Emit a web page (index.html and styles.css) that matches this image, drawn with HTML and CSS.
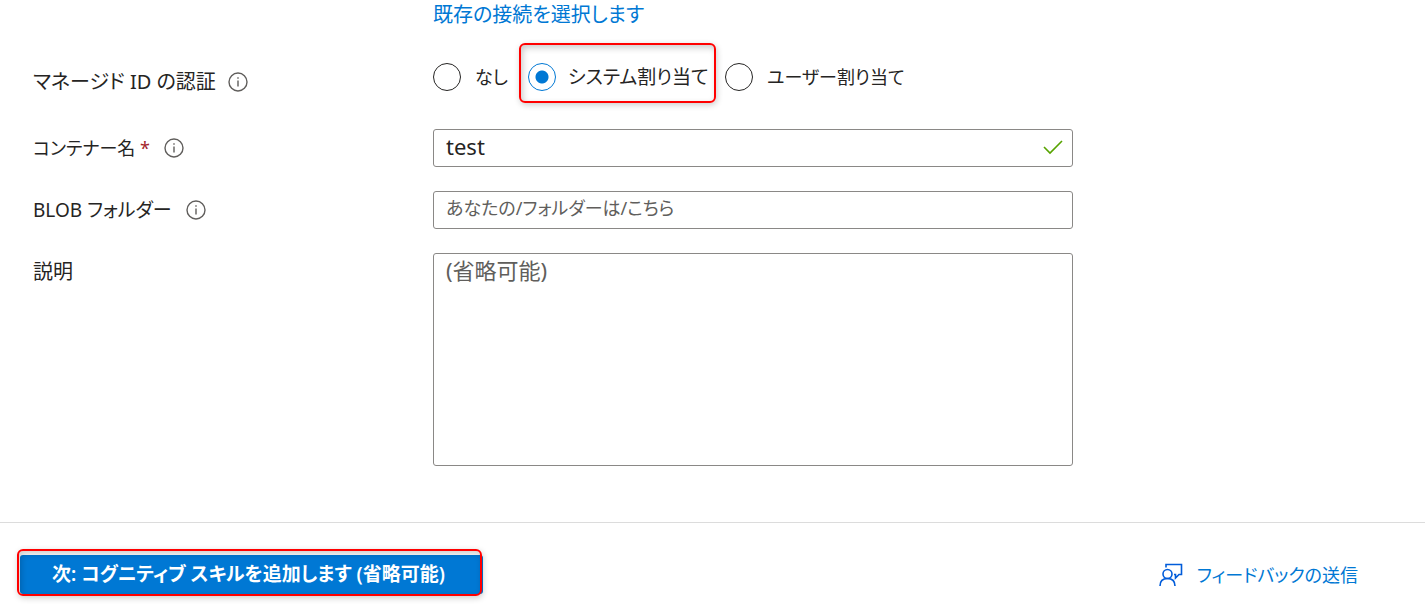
FILE: index.html
```html
<!DOCTYPE html>
<html lang="ja">

<head>
    <meta charset="utf-8">
    <title>データのインポート</title>
    <link rel="stylesheet" href="styles.css">
</head>

<body>
    <form class="form">
        <div class="row row-link">
            <a class="link" href="#">既存の接続を選択します</a>
        </div>
        <div class="row row-auth" role="radiogroup" aria-labelledby="auth_label">
            <div class="label">
                <span id="auth_label">マネージド ID の認証</span>
                <svg class="info" viewBox="0 0 20 20" aria-hidden="true">
                    <circle cx="10" cy="10" r="9" />
                    <path d="M10 8.5v6M10 5.2v1.6" />
                </svg>
            </div>
            <div class="radios">
                <label class="radio"><input type="radio" name="auth"><span>なし</span></label>
                <label class="radio marked"><input type="radio" name="auth" checked><span>システム割り当て</span></label>
                <label class="radio"><input type="radio" name="auth"><span>ユーザー割り当て</span></label>
            </div>
        </div>
        <div class="row">
            <div class="label compact">
                <label for="container">コンテナー名 <span class="required">*</span></label>
                <svg class="info" viewBox="0 0 20 20" aria-hidden="true">
                    <circle cx="10" cy="10" r="9" />
                    <path d="M10 8.5v6M10 5.2v1.6" />
                </svg>
            </div>
            <div class="field valid">
                <input type="text" id="container" class="large" value="test">
                <svg class="check" viewBox="0 0 20 16" aria-hidden="true">
                    <path d="M1 8l6 6L19 2" />
                </svg>
            </div>
        </div>
        <div class="row">
            <div class="label medium">
                <label for="folder">BLOB フォルダー</label>
                <svg class="info" viewBox="0 0 20 20" aria-hidden="true">
                    <circle cx="10" cy="10" r="9" />
                    <path d="M10 8.5v6M10 5.2v1.6" />
                </svg>
            </div>
            <div class="field">
                <input type="text" id="folder" class="compact" placeholder="あなたの/フォルダーは/こちら">
            </div>
        </div>
        <div class="row">
            <div class="label">
                <label for="description">説明</label>
            </div>
            <div class="field">
                <textarea id="description" class="large" placeholder="(省略可能)"></textarea>
            </div>
        </div>
    </form>
    <footer class="footer">
        <div class="next-wrap">
            <button type="button" class="next medium">次: コグニティブ スキルを追加します (省略可能)</button>
        </div>
        <a class="link feedback compact" href="#">
            <svg class="feedback-icon" viewBox="0 0 24 24" aria-hidden="true">
                <circle cx="8.5" cy="11" r="4.5" />
                <path d="M1 23c0-5 3-7.500 7.500-7.500S16 18 16 23" />
                <path d="M7 4.500V1.500h15.500v10H20L16.500 15v-3.500H15" />
            </svg>
            <span>フィードバックの送信</span>
        </a>
    </footer>
</body>

</html>
```
FILE: styles.css
```css
:root {
    --text: #252423;
    --muted: #605e5c;
    --border: #8a8886;
    --blue: #0078d4;
    --mark: #ff0000;
    font-family: "Noto Sans", "Noto Sans CJK JP", sans-serif;
    font-size: 20px;
    line-height: 28px;
    font-feature-settings: "palt";
    color: var(--text);
}

* {
    box-sizing: border-box;
}

body {
    margin: 0;
    background: #fff;
}

input,
textarea,
button {
    font: inherit;
    font-feature-settings: inherit;
    color: inherit;
}

.compact {
    font-size: 18px;
}

.medium {
    font-size: 19px;
}

.large {
    font-size: 22px;
}

.link {
    color: var(--blue);
    text-decoration: none;
}

.form {
    display: flex;
    flex-direction: column;
    gap: 24px;
    padding: 1px 33px 56px;
}

.row {
    display: grid;
    grid-template-columns: 400px minmax(0, 640px);
}

.row-link .link {
    grid-column: 2;
}

.row-auth {
    margin: -10px 0 2px;
}

.row-auth .label {
    gap: 12px;
    padding-top: 25px;
}

.label {
    display: flex;
    align-items: center;
    align-self: start;
    gap: 14px;
    padding-top: 5px;
}

.required {
    color: #a4262c;
}

.info {
    width: 20px;
    height: 20px;
    fill: none;
    stroke: var(--muted);
    stroke-width: 1.4;
}

.radios {
    display: grid;
    grid-template-columns: 77px 197px auto;
    justify-content: start;
    column-gap: 9px;
}

.radio {
    display: flex;
    align-items: center;
    gap: 14px;
    height: 60px;
    padding-top: 8px;
    font-size: 18px;
    white-space: nowrap;
}

.radio input {
    appearance: none;
    flex: none;
    width: 28px;
    height: 28px;
    margin: 0;
    border: 1px solid var(--text);
    border-radius: 50%;
}

.radio input:checked {
    border-color: var(--blue);
    background: radial-gradient(circle, var(--blue) 6px, transparent 7px);
}

.marked {
    gap: 12px;
    padding-left: 7px;
    font-size: 19px;
}

.marked,
.next-wrap::after {
    border: 2px solid var(--mark);
    border-radius: 6px;
    box-shadow: 1px 2px 6px rgba(0, 0, 0, 0.2), inset 2px 3px 6px rgba(0, 0, 0, 0.2);
}

.field {
    display: flex;
    position: relative;
}

.field input,
.field textarea {
    width: 100%;
    height: 38px;
    margin: 0;
    padding: 2px 12px 6px;
    border: 1px solid var(--border);
    border-radius: 3px;
    background: #fff;
}

.field textarea {
    resize: none;
    height: 213px;
}

.field ::placeholder {
    color: var(--muted);
    opacity: 1;
}

.valid input {
    padding-right: 40px;
}

.check {
    position: absolute;
    top: 10px;
    right: 10px;
    width: 20px;
    height: 16px;
    fill: none;
    stroke: #57a300;
    stroke-width: 1.6;
}

.footer {
    display: flex;
    justify-content: space-between;
    align-items: center;
    padding: 32px 67px 18px 20px;
    border-top: 1px solid #dcdcdc;
}

.next-wrap {
    position: relative;
}

/* red frame drawn over the button */
.next-wrap::after {
    content: "";
    position: absolute;
    top: -6px;
    right: 1px;
    bottom: -2px;
    left: -3px;
    pointer-events: none;
}

.next {
    display: block;
    min-width: 463px;
    padding: 5px 32px 6px;
    border: none;
    border-radius: 3px;
    background: var(--blue);
    color: #fff;
    font-weight: 600;
    text-align: left;
}

.feedback {
    display: flex;
    align-items: center;
    gap: 14px;
}

.feedback-icon {
    width: 24px;
    height: 24px;
    fill: none;
    stroke: #015cda;
    stroke-width: 1.6;
}
```
